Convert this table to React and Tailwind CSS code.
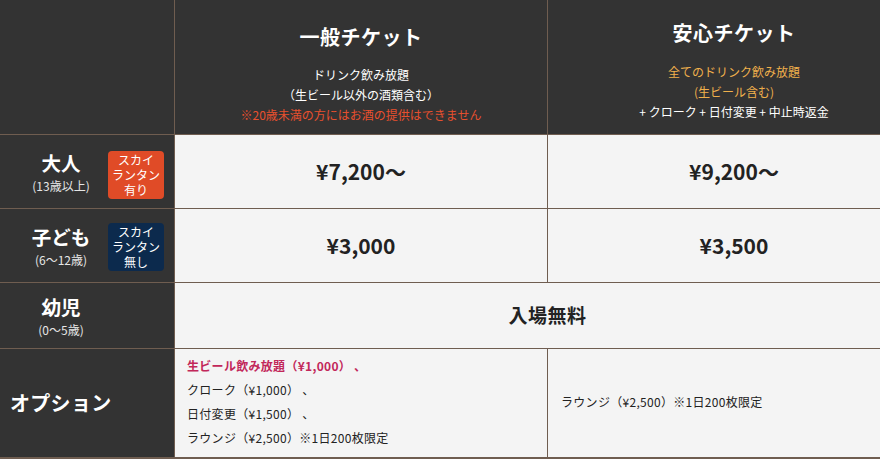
const font = { fontFamily: '"Noto Sans CJK JP", "Noto Sans", sans-serif' };

function Badge({ color, children }) {
  return (
    <div className={`w-[56px] h-[48px] rounded-[4px] ${color} text-white text-[12px] leading-[15px] flex flex-col items-center justify-center text-center shrink-0`}>
      {children}
    </div>
  );
}

function RowHead({ title, sub, badge }) {
  return (
    <div className="bg-[#333333] flex items-center">
      <div className="w-[108px] pl-[14px] text-center text-white pt-[3px]">
        <div className="text-[19.5px] font-bold leading-[26px]">{title}</div>
        <div className="text-[12px] leading-[20px] text-[#e6e6e6]">{sub}</div>
      </div>
      {badge}
    </div>
  );
}

export default function App() {
  return (
    <div style={font} className="w-[880px] h-[459px] bg-[#6f5d50] overflow-hidden">
      <div className="w-[920px] grid grid-cols-[174px_372px_372px] grid-rows-[134px_73px_73px_65px_108px] gap-px">
        <div className="bg-[#333333]" />
        <div className="bg-[#333333] flex flex-col items-center text-center text-white">
          <h2 className="text-[20px] font-bold leading-[28px] mt-[23px] tracking-[0.5px]">一般チケット</h2>
          <div className="text-[12px] leading-[20px] mt-[14px]">
            <p>ドリンク飲み放題</p>
            <p>（生ビール以外の酒類含む）</p>
            <p className="text-[#e8502e]">※20歳未満の方にはお酒の提供はできません</p>
          </div>
        </div>
        <div className="bg-[#333333] flex flex-col items-center text-center text-white">
          <h2 className="text-[20px] font-bold leading-[28px] mt-[19px] tracking-[0.5px]">安心チケット</h2>
          <div className="text-[12px] leading-[20px] mt-[15px]">
            <p className="text-[#f0b04c]">全てのドリンク飲み放題</p>
            <p className="text-[#f0b04c]">(生ビール含む)</p>
            <p>+ クローク + 日付変更 + 中止時返金</p>
          </div>
        </div>

        <RowHead title="大人" sub="(13歳以上)" badge={<Badge color="bg-[#e04b27] mt-[6px]"><span>スカイ</span><span>ランタン</span><span>有り</span></Badge>} />
        <div className="bg-[#f4f4f4] flex items-center justify-center text-[21px] font-bold text-[#222]">¥7,200〜</div>
        <div className="bg-[#f4f4f4] flex items-center justify-center text-[21px] font-bold text-[#222]">¥9,200〜</div>

        <RowHead title="子ども" sub="(6〜12歳)" badge={<Badge color="bg-[#0c2a4d] mt-[2px]"><span>スカイ</span><span>ランタン</span><span>無し</span></Badge>} />
        <div className="bg-[#f4f4f4] flex items-center justify-center text-[21px] font-bold text-[#222]">¥3,000</div>
        <div className="bg-[#f4f4f4] flex items-center justify-center text-[21px] font-bold text-[#222]">¥3,500</div>

        <RowHead title="幼児" sub="(0〜5歳)" />
        <div className="col-span-2 bg-[#f4f4f4] flex items-center justify-center text-[19px] font-bold text-[#222] tracking-[0.5px]">入場無料</div>

        <div className="bg-[#333333] flex items-center pl-[10px]">
          <span className="text-white text-[20px] font-bold tracking-[0.3px]">オプション</span>
        </div>
        <div className="bg-[#f4f4f4] flex flex-col justify-center pl-[12px] text-[12px] leading-[24px] text-[#222] tracking-[0.3px] pb-[2px]">
          <p className="text-[#c2275a] font-bold">生ビール飲み放題（¥1,000）&nbsp;、</p>
          <p>クローク（¥1,000）&nbsp;、</p>
          <p>日付変更（¥1,500）&nbsp;、</p>
          <p>ラウンジ（¥2,500）※1日200枚限定</p>
        </div>
        <div className="bg-[#f4f4f4] flex items-center pl-[13px] text-[12px] text-[#222] tracking-[0.3px] pb-[2px]">
          ラウンジ（¥2,500）※1日200枚限定
        </div>
      </div>
    </div>
  );
}
